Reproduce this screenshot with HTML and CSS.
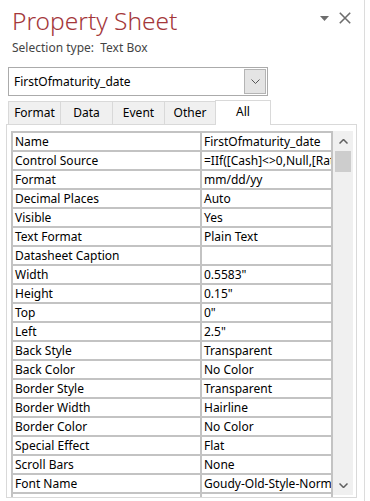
FILE: index.html
```html
<!DOCTYPE html>
<html>
<head>
<meta charset="utf-8">
<link rel="stylesheet" href="styles.css">
</head>
<body>
<div class="pane">
  <div class="header">
    <h1 class="title">Property Sheet</h1>
    <div class="controls">
      <svg class="ico-tri" width="9" height="5" viewBox="0 0 9 5"><path d="M0 0H9L4.5 5Z" fill="#6d6d6d"/></svg>
      <svg class="ico-x" width="12" height="12" viewBox="0 0 12 12"><path d="M0.8 0.8L11.2 11.2M11.2 0.8L0.8 11.2" stroke="#6d6d6d" stroke-width="1.6"/></svg>
    </div>
  </div>
  <div class="seltype">Selection type:&nbsp; Text Box</div>
  <div class="combo">
    <span class="combo-text">FirstOfmaturity_date</span>
    <span class="combo-btn"><svg width="9" height="5" viewBox="0 0 9 5"><path d="M0.5 0.5L4.5 4.5L8.5 0.5" fill="none" stroke="#555" stroke-width="1"/></svg></span>
  </div>
  <div class="tabs">
    <div class="tab t1">Format</div>
    <div class="tab t2">Data</div>
    <div class="tab t3">Event</div>
    <div class="tab t4">Other</div>
    <div class="tab active">All</div>
  </div>
  <div class="panel">
    <div class="gridwrap">
      <div class="grid">
        <div class="c">Name</div><div class="c">FirstOfmaturity_date</div>
        <div class="c">Control Source</div><div class="c">=IIf([Cash]&lt;&gt;0,Null,[Rate])</div>
        <div class="c">Format</div><div class="c">mm/dd/yy</div>
        <div class="c">Decimal Places</div><div class="c">Auto</div>
        <div class="c">Visible</div><div class="c">Yes</div>
        <div class="c">Text Format</div><div class="c">Plain Text</div>
        <div class="c">Datasheet Caption</div><div class="c"></div>
        <div class="c">Width</div><div class="c">0.5583"</div>
        <div class="c">Height</div><div class="c">0.15"</div>
        <div class="c">Top</div><div class="c">0"</div>
        <div class="c">Left</div><div class="c">2.5"</div>
        <div class="c">Back Style</div><div class="c">Transparent</div>
        <div class="c">Back Color</div><div class="c">No Color</div>
        <div class="c">Border Style</div><div class="c">Transparent</div>
        <div class="c">Border Width</div><div class="c">Hairline</div>
        <div class="c">Border Color</div><div class="c">No Color</div>
        <div class="c">Special Effect</div><div class="c">Flat</div>
        <div class="c">Scroll Bars</div><div class="c">None</div>
        <div class="c">Font Name</div><div class="c">Goudy-Old-Style-Normal</div>
        <div class="c"></div><div class="c"></div>
      </div>
      <div class="scrollbar">
        <div class="sb-arrow up"><svg width="9" height="5" viewBox="0 0 9 5"><path d="M0.5 4.5L4.5 0.5L8.5 4.5" fill="none" stroke="#606060" stroke-width="1.5"/></svg></div>
        <div class="sb-thumb"></div>
        <div class="sb-track"></div>
        <div class="sb-arrow down"><svg width="9" height="5" viewBox="0 0 9 5"><path d="M0.5 0.5L4.5 4.5L8.5 0.5" fill="none" stroke="#606060" stroke-width="1.5"/></svg></div>
      </div>
    </div>
  </div>
</div>
</body>
</html>
```

FILE: styles.css
```css
html, body {
  margin: 0;
  padding: 0;
  background: #ffffff;
  overflow: hidden;
  height: 501px;
}
body {
  font-family: "Noto Sans", "Open Sans", sans-serif;
  font-size: 12px;
  color: #000;
}
.pane {
  width: 365px;
  height: 501px;
  border-right: 1px solid #dcdcdc;
  box-sizing: border-box;
  overflow: hidden;
}
.header {
  display: flex;
  justify-content: space-between;
  align-items: flex-start;
  height: 40px;
}
.title {
  margin: 0;
  padding: 2px 0 0 12px;
  font-family: "Noto Sans", "Open Sans", sans-serif;
  font-weight: 300;
  font-size: 24.5px;
  line-height: 38px;
  color: #a4373a;
}
.controls {
  display: flex;
  align-items: center;
  gap: 10px;
  padding: 12px 13px 0 0;
}
.ico-tri { margin-top: 1px; }
.seltype {
  padding-left: 12px;
  color: #444444;
  line-height: 16px;
  height: 18px;
}
.combo {
  margin: 9px 0 0 8px;
  width: 260px;
  height: 29px;
  box-sizing: border-box;
  border: 1px solid #ababab;
  display: flex;
  align-items: center;
  justify-content: space-between;
  padding: 0 1px 0 5px;
}
.combo-btn {
  width: 22px;
  height: 25px;
  box-sizing: border-box;
  background: #e4e4e4;
  border: 1px solid #b4b4b4;
  display: flex;
  align-items: center;
  justify-content: center;
}
.tabs {
  display: flex;
  margin: 4px 0 0 8px;
  height: 24px;
  align-items: flex-end;
}
.tab {
  height: 23px;
  box-sizing: border-box;
  background: #f0f0f0;
  border: 1px solid #d9d9d9;
  border-right: none;
  border-bottom: none;
  text-align: center;
  line-height: 22px;
}
.t1 { width: 52px; }
.t2 { width: 52px; }
.t3 { width: 52px; }
.t4 { width: 51px; }
.tab.active {
  width: 56px;
  height: 25px;
  background: #ffffff;
  border-right: 1px solid #d9d9d9;
  margin-bottom: -1px;
  position: relative;
  z-index: 1;
  line-height: 22px;
}
.panel {
  margin-left: 6px;
  width: 351px;
  height: 374px;
  box-sizing: border-box;
  border: 1px solid #d9d9d9;
  padding: 6px 0 0 4px;
  overflow: hidden;
}
.gridwrap {
  display: flex;
  align-items: flex-start;
}
.grid {
  display: grid;
  grid-template-columns: 187px 129px;
  grid-auto-rows: 17px;
  gap: 2px;
  padding: 2px;
  background: #c3c3c3;
}
.c {
  background: #ffffff;
  padding-left: 2px;
  line-height: 17px;
  white-space: nowrap;
  overflow: hidden;
}
.scrollbar {
  width: 20px;
  height: 364px;
  background: #f0f0f0;
  display: flex;
  flex-direction: column;
  align-items: center;
}
.sb-arrow {
  height: 20px;
  width: 20px;
  display: flex;
  align-items: center;
  justify-content: center;
}
.sb-thumb {
  width: 16px;
  height: 21px;
  background: #cdcdcd;
}
.sb-track { flex: 1; }
```
